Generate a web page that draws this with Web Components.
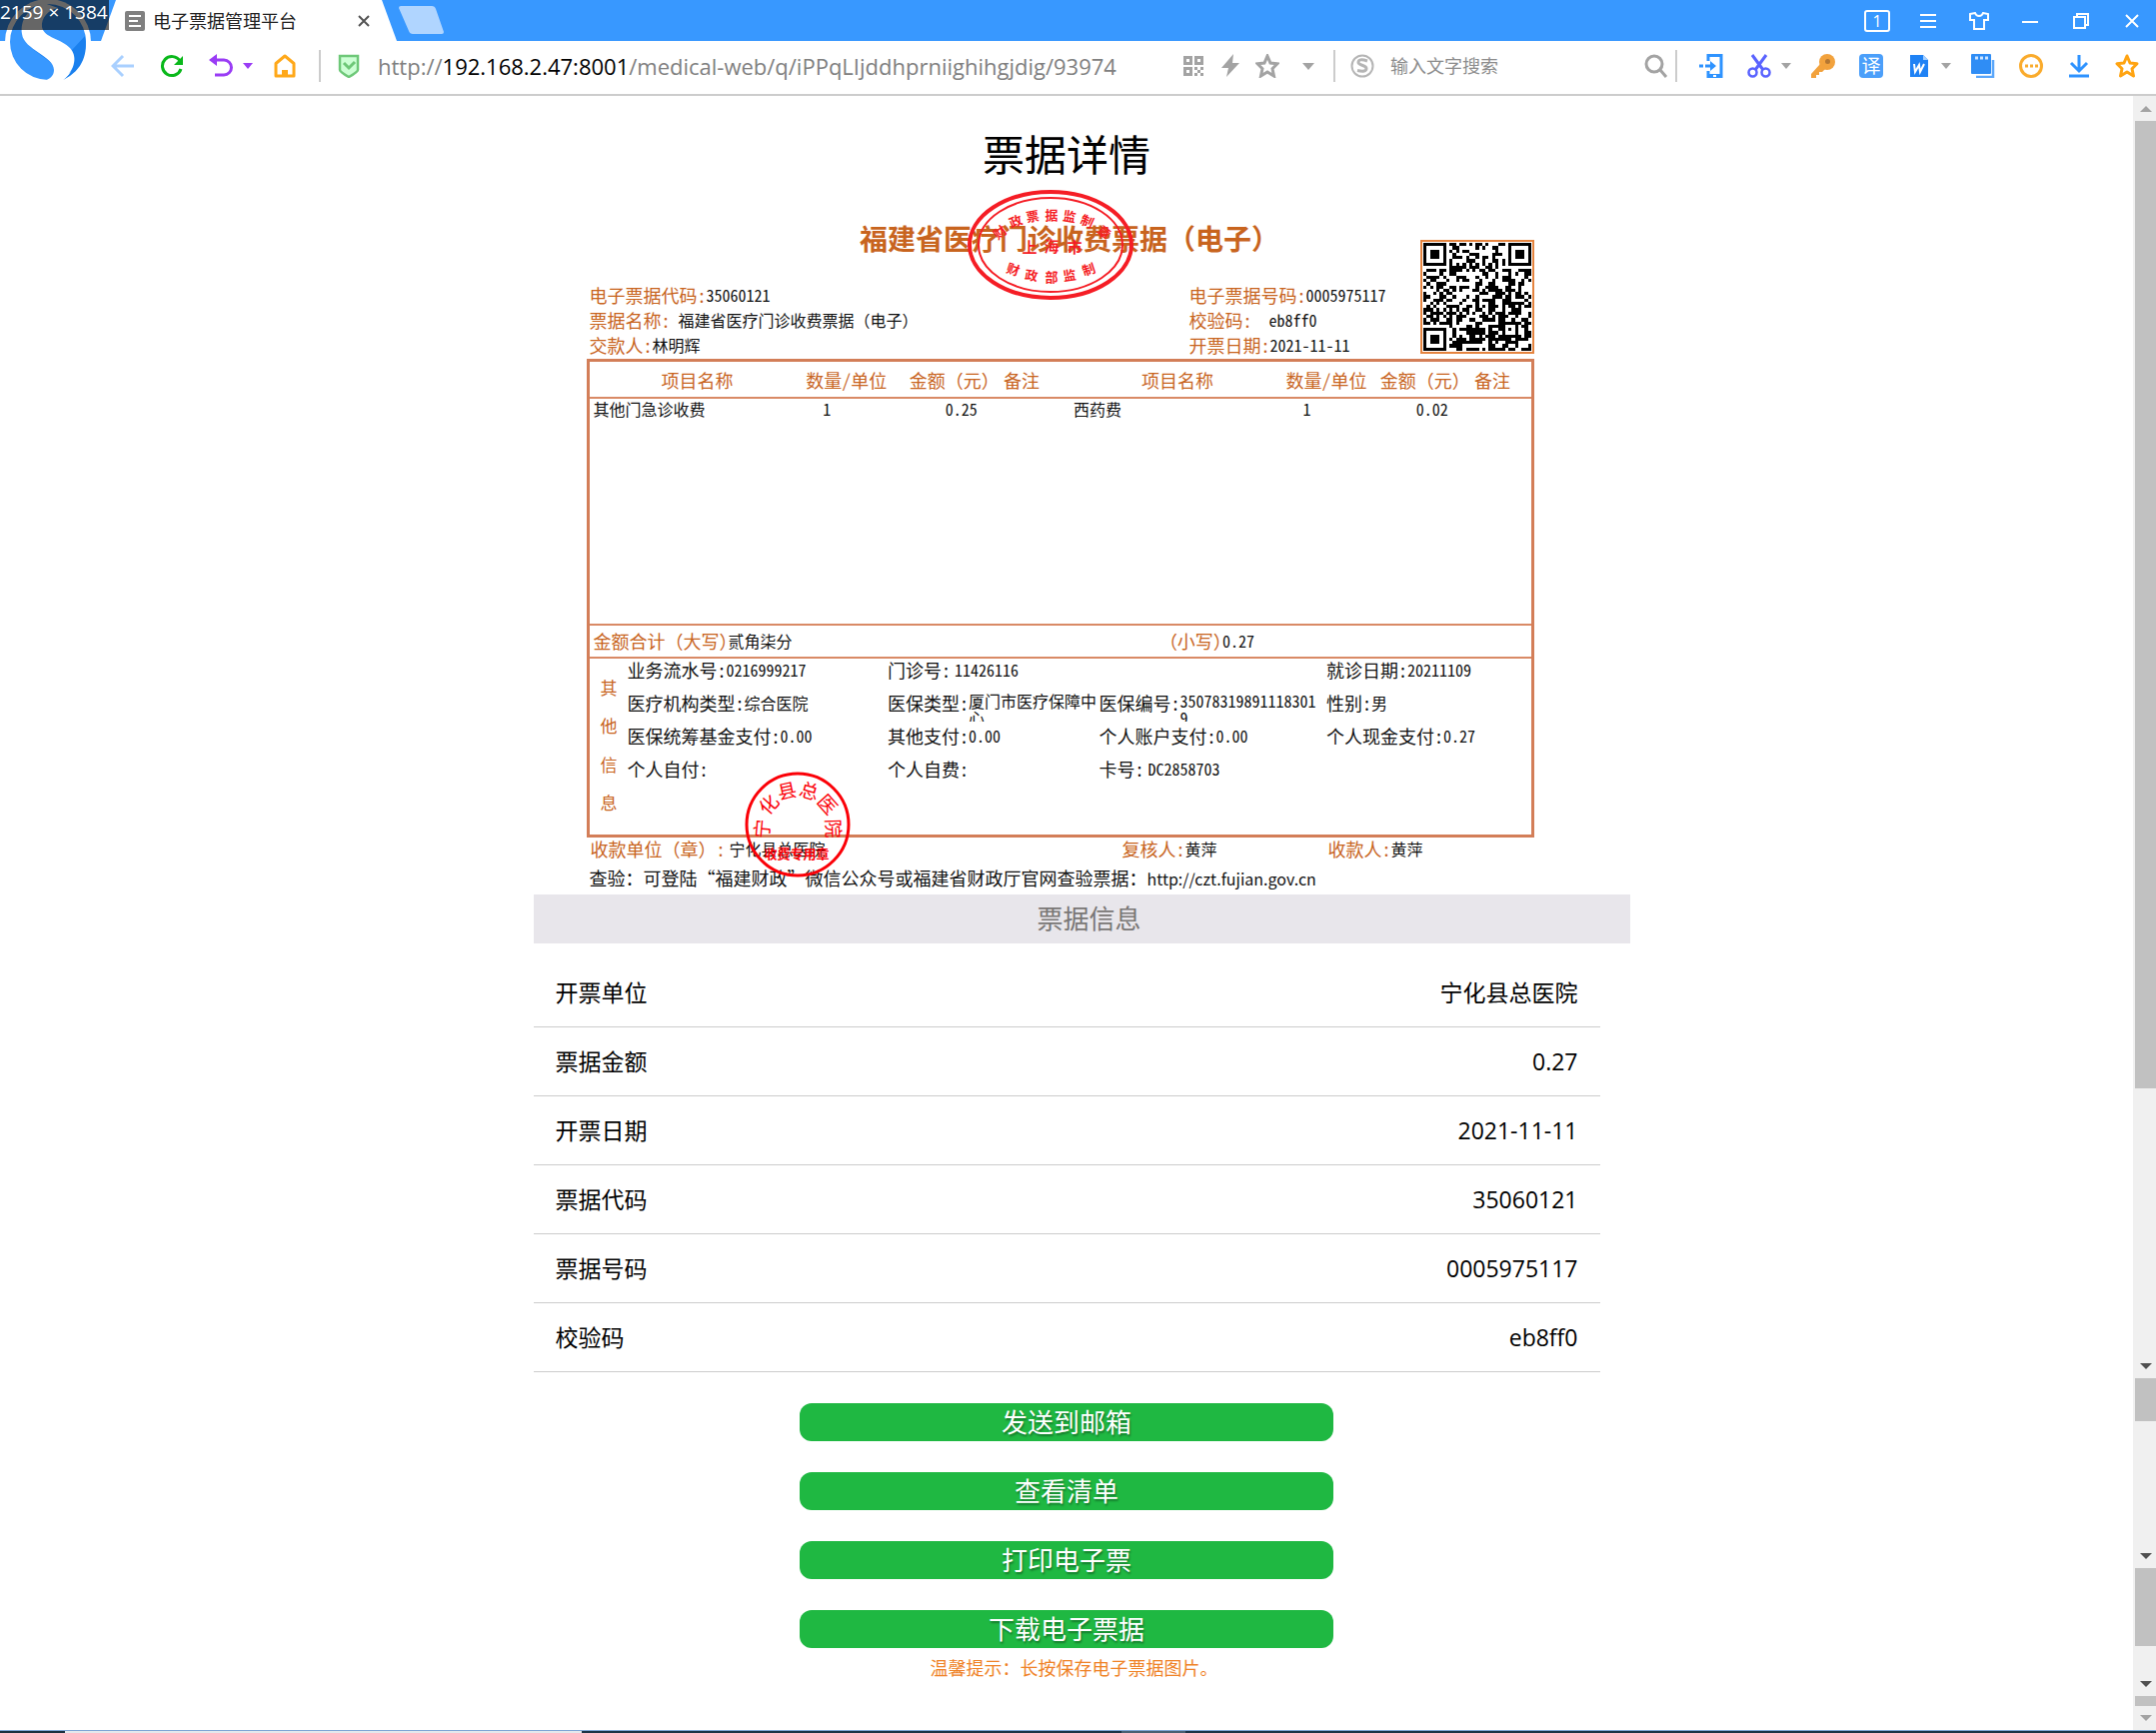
<!DOCTYPE html>
<html lang="zh-CN">
<head>
<meta charset="utf-8">
<title>电子票据管理平台</title>
<style>
  html, body {
    margin: 0;
  }
  body {
    min-height: 100vh;
    display: flex;
    flex-direction: column;
    background: #fff;
    color: #000;
    font-family: "Open Sans", "Noto Sans CJK SC", sans-serif;
  }
  .viewport {
    flex: 1;
    display: flex;
  }
  main {
    flex: 1;
    min-width: 0;
  }
  .column {
    width: 50%;
    margin: 0 auto;
  }
  h1 {
    margin: 0;
    padding-top: 29px;
    font-size: 42px;
    line-height: 60px;
    font-weight: 400;
    text-align: center;
  }
  .rows {
    margin-top: 15px;
  }
  .actions {
    display: flex;
    flex-direction: column;
    align-items: center;
    gap: 31px;
    padding-top: 31px;
  }
  .hint {
    margin: 0;
    padding: 6px 0 0 15px;
    color: #ef8226;
    font-size: 18px;
    line-height: 28px;
    text-align: center;
  }
</style>
</head>
<body>
  <browser-tabs tab-title="电子票据管理平台" size="2159 × 1384"></browser-tabs>
  <browser-toolbar></browser-toolbar>
  <div class="viewport">
    <main>
      <div class="column">
        <h1>票据详情</h1>
        <medical-receipt></medical-receipt>
        <section-bar>票据信息</section-bar>
        <div class="rows">
          <info-row label="开票单位">宁化县总医院</info-row>
          <info-row label="票据金额">0.27</info-row>
          <info-row label="开票日期">2021-11-11</info-row>
          <info-row label="票据代码">35060121</info-row>
          <info-row label="票据号码">0005975117</info-row>
          <info-row label="校验码">eb8ff0</info-row>
        </div>
        <div class="actions">
          <action-button>发送到邮箱</action-button>
          <action-button>查看清单</action-button>
          <action-button>打印电子票</action-button>
          <action-button>下载电子票据</action-button>
        </div>
        <p class="hint">温馨提示：长按保存电子票据图片。</p>
      </div>
    </main>
    <scroll-track></scroll-track>
  </div>
  <task-edge></task-edge>

<script>
  function attach(el, html) {
    const root = el.attachShadow({ mode: 'open' });
    const template = document.createElement('template');
    template.innerHTML = html;
    root.appendChild(template.content.cloneNode(true));
    return root;
  }

  // tab strip with logo and window controls
  class BrowserTabs extends HTMLElement {
    constructor() {
      super();
      this.root = attach(this, `
        <style>
          :host {
            position: relative;
            display: flex;
            justify-content: space-between;
            height: 41px;
            background: #3898ff;
          }
          button {
            border: 0;
            padding: 0;
            background: none;
            display: flex;
            align-items: center;
            justify-content: center;
          }
          .left, .controls {
            display: flex;
            align-items: center;
          }
          .left {
            align-items: flex-start;
            padding-left: 101px;
          }
          .tab {
            display: flex;
            align-items: center;
            box-sizing: border-box;
            width: 296px;
            height: 41px;
            padding: 0 27px 0 24px;
            background: #fff;
            clip-path: polygon(15px 0, 281px 0, 296px 100%, 0 100%);
          }
          .tab span {
            flex: 1;
            margin-left: 8px;
            font-size: 18px;
            line-height: 26px;
            color: #222;
          }
          .new {
            margin: 6px 0 0 2px;
          }
          .controls {
            gap: 25px;
            padding-right: 11px;
            height: 41px;
          }
          .controls button {
            width: 26px;
            height: 24px;
            color: #fff;
          }
          .controls .count {
            box-sizing: border-box;
            border: 2px solid #fff;
            border-radius: 3px;
            font: 16px/18px "Open Sans", sans-serif;
            height: 22px;
          }
          .logo {
            position: absolute;
            left: 5px;
            top: 0;
            z-index: 2;
          }
          .size {
            position: absolute;
            left: 0;
            top: 0;
            z-index: 3;
            width: 109px;
            height: 30px;
            background: rgba(0, 0, 0, .6);
            color: #fff;
            font-size: 19px;
            line-height: 24px;
            white-space: nowrap;
          }
        </style>
        <div class="left">
          <div class="tab">
            <svg width="20" height="20" viewBox="0 0 20 20"><rect width="20" height="20" rx="2" fill="#808080"/><path d="M4 5h12M4 10h9M4 15h12" stroke="#fff" stroke-width="2"/></svg>
            <span></span>
            <button aria-label="关闭标签"><svg width="12" height="12" viewBox="0 0 12 12"><path d="M1 1l10 10M11 1L1 11" stroke="#555" stroke-width="2"/></svg></button>
          </div>
          <button class="new" aria-label="新标签"><svg width="46" height="28" viewBox="0 0 46 28"><path d="M2 0h31q3 0 4 3l8 23q0 2-2 2H14q-3 0-4-3L0 2q0-2 2-2z" fill="#b0d5ff"/></svg></button>
        </div>
        <svg class="logo" width="86" height="84" viewBox="5 0 86 84">
          <circle cx="48" cy="42" r="43" fill="#fff"/>
          <circle cx="48" cy="42" r="38" fill="#3898ff"/>
          <path d="M24 26C18 46 44 54 54 66C52 52 36 44 24 26z" fill="#1a7ff0"/>
          <path d="M72 50C78 62 72 74 63 80C84 70 88 52 85 36z" fill="#1a80ee"/>
          <path d="M44 3C28 8 20 20 22 34C24 50 54 56 54 70C54 76 50 79 44 81L63 80C73 72 79 58 70 48C62 39 44 38 42 27C41 18 48 10 58 8z" fill="#fff"/>
        </svg>
        <div class="size"></div>
        <div class="controls">
          <button class="count">1</button>
          <button aria-label="菜单"><svg width="16" height="16" viewBox="0 0 16 16"><path d="M0 2h16M0 8h16M0 14h16" stroke="#fff" stroke-width="2"/></svg></button>
          <button aria-label="皮肤"><svg width="20" height="18" viewBox="0 0 20 18"><path d="M1 2l5-1q1 3 4 3t4-3l5 1v6h-4v9H5V8H1z" fill="none" stroke="#fff" stroke-width="2"/></svg></button>
          <button aria-label="最小化"><svg width="16" height="16" viewBox="0 0 16 16"><path d="M0 9h16" stroke="#fff" stroke-width="2"/></svg></button>
          <button aria-label="还原"><svg width="16" height="16" viewBox="0 0 16 16"><path d="M1 4h11v11H1zM4 4V1h11v11h-3" fill="none" stroke="#fff" stroke-width="2"/></svg></button>
          <button aria-label="关闭"><svg width="14" height="14" viewBox="0 0 14 14"><path d="M1 1l12 12M13 1L1 13" stroke="#fff" stroke-width="2"/></svg></button>
        </div>
      `);
    }

    connectedCallback() {
      this.root.querySelector('.tab span').textContent = this.getAttribute('tab-title');
      this.root.querySelector('.size').textContent = this.getAttribute('size');
    }
  }
  customElements.define('browser-tabs', BrowserTabs);

  const ICONS = {
    back: '<path d="M23 12H3M12 2L2 12l10 10" fill="none" stroke="#a9d0ff" stroke-width="3"/>',
    reload: '<path d="M20 7a9.500 9.500 0 1 0 1 8" fill="none" stroke="#0ab81b" stroke-width="3"/><path d="M23 2v9h-9z" fill="#0ab81b"/>',
    undo: '<path d="M4 6h11a7 7 0 0 1 0 15H6" fill="none" stroke="#9a3cf5" stroke-width="3"/><path d="M0 6l8-6v12z" fill="#9a3cf5"/>',
    home: '<path d="M3 9.500L12 2l9 7.500V22H3z" fill="none" stroke="#ffa819" stroke-width="3" stroke-linejoin="round"/><path d="M9 21v-5h6v5z" fill="#ffa819"/>',
    shield: '<path d="M3 2h18v14q0 2-9 7q-9-5-9-7z" fill="#ccffd4" stroke="#6ec878" stroke-width="2.500"/><path d="M7 9l5 5 6-6" fill="none" stroke="#6ec878" stroke-width="3"/>',
    code: '<g fill="none" stroke="#a3a3a3" stroke-width="3"><path d="M3.500 3.500h6v6h-6zM14.500 3.500h6v6h-6zM3.500 14.500h6v6h-6z"/></g><path d="M13 13h3v3h-3zM19 13h3v3h-3zM16 16h3v3h-3zM13 19h3v3h-3zM19 19h3v3h-3z" fill="#a3a3a3"/>',
    bolt: '<path d="M15 0L3 14h7l-2 9L21 9h-7z" fill="#a3a3a3"/>',
    fav: '<path d="M12 2l3 7 7 .7-5 5 1.500 7.300L12 18l-6.500 4L7 14.700l-5-5L9 9z" fill="none" stroke="#a3a3a3" stroke-width="3"/>',
    sogou: '<circle cx="12" cy="12" r="10.500" fill="none" stroke="#b5b5b5" stroke-width="2"/><path d="M17 7q-9-3-9 1.500c0 3 8 2.500 8 6q0 4-9 2" fill="none" stroke="#b5b5b5" stroke-width="3"/>',
    search: '<circle cx="10" cy="10" r="8" fill="none" stroke="#a3a3a3" stroke-width="3"/><path d="M16 16l6 7" stroke="#a3a3a3" stroke-width="3"/>',
    phone: '<path d="M9 7V1.500h13v21H9V17" fill="none" stroke="#2e93ff" stroke-width="3"/><path d="M8 20h15v4H8z" fill="#2e93ff"/><path d="M0 12h4M6 12h5" stroke="#2e93ff" stroke-width="3"/><path d="M11 7l6 5-6 5z" fill="#2e93ff"/><path d="M14 21h3v2h-3z" fill="#fff"/>',
    cut: '<path d="M5 1l11 15M19 1L8 16" stroke="#5a63ff" stroke-width="3"/><circle cx="5.500" cy="18.500" r="4" fill="none" stroke="#5a63ff" stroke-width="2.500"/><circle cx="18.500" cy="18.500" r="4" fill="none" stroke="#5a63ff" stroke-width="2.500"/>',
    key: '<circle cx="16" cy="8" r="8" fill="#f2a23d"/><path d="M9 10L0 20v4h5v-3h3v-3h3l5-5z" fill="#f2a23d"/><circle cx="16.500" cy="7.500" r="2.500" fill="#b37632"/>',
    word: '<path d="M3 1h13l5 5v17H3z" fill="#1f82f5"/><path d="M16 1l5 5h-5z" fill="#a5d0ff"/><path d="M7 10l1 8 4-7 1 7 4-8" fill="none" stroke="#fff" stroke-width="2"/>',
    film: '<path d="M22 6v17H5" fill="none" stroke="#5aa6fa" stroke-width="2.500"/><rect width="20" height="20" rx="1" fill="#2f8df5"/><path d="M4 4h3M9 4h3M14 4h3" stroke="#cfe5ff" stroke-width="3"/>',
    more: '<circle cx="12" cy="12" r="10.500" fill="none" stroke="#faab2c" stroke-width="3"/><path d="M6 12h3M11 12h3M16 12h3" stroke="#faab2c" stroke-width="3"/>',
    download: '<path d="M12 1v16M4 9l8 8 8-8M2 22h20" fill="none" stroke="#2e93ff" stroke-width="3"/>',
    star: '<path d="M12 2l3 7 7 .7-5 5 1.500 7.300L12 18l-6.500 4L7 14.700l-5-5L9 9z" fill="none" stroke="#ffa412" stroke-width="3" stroke-linejoin="round"/>',
    trans: '<rect width="24" height="24" rx="4" fill="#4b9ffa"/><text x="12" y="19" font-size="19" text-anchor="middle" fill="#fff">译</text>'
  };

  class ToolIcon extends HTMLElement {
    connectedCallback() {
      const name = this.getAttribute('name');
      attach(this, `
        <style>
          :host { display: block; flex: none; width: 24px; height: 24px; }
          button { display: block; width: 24px; height: 24px; padding: 0; border: 0; background: none; font-family: inherit; }
          svg { display: block; }
        </style>
        <button aria-label="${this.getAttribute('label')}"><svg width="24" height="24" viewBox="0 0 24 24">${ICONS[name]}</svg></button>
      `);
    }
  }
  customElements.define('tool-icon', ToolIcon);

  class BrowserToolbar extends HTMLElement {
    constructor() {
      super();
      attach(this, `
        <style>
          :host {
            display: flex;
            align-items: center;
            height: 50px;
            padding-bottom: 3px;
            border-bottom: 2px solid #ccc;
            background: #fff;
          }
          .nav, .tools {
            display: flex;
            align-items: center;
          }
          .nav {
            gap: 25px;
            padding: 0 22px 0 111px;
          }
          .tools {
            gap: 24px;
            padding: 0 17px 0 22px;
          }
          .caret {
            width: 0;
            border: 5px solid transparent;
            border-top: 6px solid #a3a3a3;
            border-bottom: 0;
          }
          .nav .caret { margin: 0 -5px 0 -15px; border-top-color: #9a3cf5; }
          .tools .caret { margin: 0 -4px 0 -14px; }
          .sep {
            width: 2px;
            height: 32px;
            background: #ccc;
          }
          .address {
            flex: 1;
            min-width: 0;
            display: flex;
            align-items: center;
            gap: 13px;
            padding: 0 19px 0 16px;
          }
          .url {
            flex: 1;
            min-width: 0;
            overflow: hidden;
            white-space: nowrap;
            margin-left: 4px;
            color: #808080;
            font-size: 22px;
            line-height: 28px;
          }
          .url b { font-weight: 400; color: #000; }
          .address .caret { margin: 0 0 0 10px; border-width: 7px 6px 0; }
          .search {
            display: flex;
            align-items: center;
            width: 340px;
            box-sizing: border-box;
            padding: 0 7px 0 15px;
          }
          input {
            flex: 1;
            min-width: 0;
            border: 0;
            padding: 0 0 0 16px;
            font: 18px/28px "Open Sans", "Noto Sans CJK SC", sans-serif;
            outline: 0;
          }
          input::placeholder { color: #8c8c8c; }
        </style>
        <div class="nav">
          <tool-icon name="back" label="后退"></tool-icon>
          <tool-icon name="reload" label="刷新"></tool-icon>
          <tool-icon name="undo" label="恢复"></tool-icon>
          <i class="caret"></i>
          <tool-icon name="home" label="主页"></tool-icon>
        </div>
        <i class="sep"></i>
        <div class="address">
          <tool-icon name="shield" label="安全"></tool-icon>
          <div class="url" role="textbox" contenteditable="true" spellcheck="false" aria-label="地址">http://<b>192.168.2.47:8001</b>/medical-web/q/iPPqLIjddhprniighihgjdig/93974</div>
          <tool-icon name="code" label="二维码"></tool-icon>
          <tool-icon name="bolt" label="加速"></tool-icon>
          <tool-icon name="fav" label="收藏"></tool-icon>
          <i class="caret"></i>
        </div>
        <i class="sep"></i>
        <div class="search">
          <tool-icon name="sogou" label="搜索引擎"></tool-icon>
          <input type="text" placeholder="输入文字搜索" aria-label="输入文字搜索">
          <tool-icon name="search" label="搜索"></tool-icon>
        </div>
        <i class="sep"></i>
        <div class="tools">
          <tool-icon name="phone" label="手机"></tool-icon>
          <tool-icon name="cut" label="截图"></tool-icon>
          <i class="caret"></i>
          <tool-icon name="key" label="密码"></tool-icon>
          <tool-icon name="trans" label="翻译"></tool-icon>
          <tool-icon name="word" label="文档"></tool-icon>
          <i class="caret"></i>
          <tool-icon name="film" label="视频"></tool-icon>
          <tool-icon name="more" label="更多"></tool-icon>
          <tool-icon name="download" label="下载"></tool-icon>
          <tool-icon name="star" label="收藏夹"></tool-icon>
        </div>
      `);
    }
  }
  customElements.define('browser-toolbar', BrowserToolbar);

  class QrCode extends HTMLElement {
    constructor() {
      super();
      const n = 33;
      let seed = 35060121;
      let d = '';
      const finder = (x, y) => {
        const r = Math.max(Math.abs(x - 3), Math.abs(y - 3));
        return r === 3 || r < 2;
      };
      for (let y = 0; y < n; y++) {
        for (let x = 0; x < n; x++) {
          seed = (seed * 1103515245 + 12345) % 2147483648;
          let on = (seed >> 12) % 100 < 51;
          if (x === 6 || y === 6) on = (x + y) % 2 === 0;
          if (Math.abs(x - 26) < 3 && Math.abs(y - 26) < 3) {
            const r = Math.max(Math.abs(x - 26), Math.abs(y - 26));
            on = r !== 1;
          }
          if (x < 8 && y < 8) on = x < 7 && y < 7 && finder(x, y);
          if (x > 24 && y < 8) on = x > 25 && y < 7 && finder(x - 26, y);
          if (x < 8 && y > 24) on = x < 7 && y > 25 && finder(x, y - 26);
          if (on) d += `M${x} ${y}h1v1h-1z`;
        }
      }
      attach(this, `
        <style>
          :host { display: block; box-sizing: border-box; width: 114px; height: 114px; padding: 1px; border: 2px solid #e5843f; }
          svg { display: block; }
        </style>
        <svg width="108" height="108" viewBox="0 0 33 33" shape-rendering="crispEdges" role="img" aria-label="二维码"><path d="${d}"/></svg>
      `);
    }
  }
  customElements.define('qr-code', QrCode);

  // label and value pair on the receipt; value comes from the slot
  class ReceiptField extends HTMLElement {
    connectedCallback() {
      attach(this, `
        <style>
          :host {
            display: flex;
            align-items: flex-start;
            min-width: 0;
            height: var(--field-line, 22px);
            line-height: var(--field-line, 22px);
            white-space: nowrap;
          }
          .label {
            flex: none;
            color: var(--label, #111);
            font-size: 18px;
          }
          .value {
            color: #111;
            font-size: 16px;
            margin-left: var(--value-gap, 0);
          }
          :host([wrap]) .value {
            max-width: 138px;
            max-height: 29px;
            line-height: 17px;
            padding-top: 1px;
            overflow: hidden;
            white-space: normal;
            word-break: break-all;
          }
        </style>
        <span class="label">${this.getAttribute('label')}</span>
        <span class="value"><slot></slot></span>
      `);
    }
  }
  customElements.define('receipt-field', ReceiptField);

  function arcText(items, size) {
    return items.map(([ch, x, y, r]) =>
      `<text x="${x}" y="${y}" font-size="${size}" transform="rotate(${r} ${x} ${y})">${ch}</text>`).join('');
  }

  class ReceiptStamp extends HTMLElement {
    connectedCallback() {
      const oval = this.getAttribute('kind') === 'oval';
      const art = oval ? `
        <svg width="166" height="111" viewBox="0 0 166 111">
          <ellipse cx="83" cy="55" rx="81" ry="53" fill="none" stroke="#f51d25" stroke-width="4"/>
          <ellipse cx="83" cy="55" rx="72" ry="47" fill="none" stroke="#f51d25" stroke-width="2"/>
          <g fill="#f51d25" text-anchor="middle" dominant-baseline="central" font-weight="700">
          ${arcText([['财', 32, 42, -38], ['政', 48, 31, -22], ['票', 65, 26, -10], ['据', 84, 24, 0], ['监', 102, 26, 10], ['制', 120, 31, 24], ['章', 137, 42, 38],
            ['财', 46, 79, 18], ['政', 64, 85, 8], ['部', 84, 86, 0], ['监', 102, 85, -8], ['制', 121, 79, -18]], 13)}
          ${arcText([['上', 62, 56, 0], ['海', 84, 55, 0], ['市', 107, 56, 0]], 15)}
          </g>
        </svg>` : `
        <svg width="106" height="106" viewBox="0 0 106 106">
          <circle cx="53" cy="53" r="51" fill="none" stroke="#fb0007" stroke-width="3"/>
          <g fill="#fb0007" text-anchor="middle" dominant-baseline="central">
          ${arcText([['宁', 16, 57, -85], ['化', 23, 32, -48], ['县', 42, 18, -12], ['总', 65, 18, 16], ['医', 84, 32, 48], ['院', 90, 57, 88]], 19)}
          <text x="52" y="81" font-size="13" font-weight="700">收费专用章</text>
          </g>
        </svg>`;
      attach(this, `
        <style>
          :host { display: block; }
          svg { display: block; }
        </style>
        ${art}
      `);
    }
  }
  customElements.define('receipt-stamp', ReceiptStamp);

  class MedicalReceipt extends HTMLElement {
    constructor() {
      super();
      attach(this, `
        <style>
          :host {
            --ink: #c8641e;
            position: relative;
            display: block;
            margin: 0 66px 4px 53px;
            padding-top: 35px;
            font-family: "Noto Sans Mono CJK SC", "Noto Sans CJK SC", sans-serif;
          }
          .head {
            display: grid;
            grid-template-columns: 600fr 231fr 114px;
            row-gap: 27px;
            padding-left: 3px;
            padding-bottom: 1px;
          }
          h2 {
            grid-area: 1 / 1 / 2 / 4;
            margin: 0;
            padding-left: 16px;
            color: var(--ink);
            font-size: 28px;
            line-height: 36px;
            font-weight: 700;
            text-align: center;
          }
          .head div {
            grid-row: 2;
          }
          .head receipt-field {
            --field-line: 25px;
          }
          .head receipt-field, .foot receipt-field {
            --label: var(--ink);
          }
          qr-code {
            grid-area: 1 / 3 / 3 / 4;
            align-self: end;
            margin-bottom: 4px;
          }
          .box {
            border: 3px solid #d37e58;
          }
          table {
            width: 100%;
            table-layout: fixed;
            border-collapse: collapse;
          }
          th {
            height: 35px;
            padding: 0;
            border-bottom: 2px solid #d98a66;
            color: var(--ink);
            font-size: 18px;
            line-height: 24px;
            font-weight: 400;
            text-align: left;
            white-space: nowrap;
          }
          .name { padding-left: 72px; }
          td {
            height: 226px;
            padding: 0 0 0 4px;
            box-sizing: border-box;
            vertical-align: top;
            font-size: 16px;
            line-height: 20px;
            color: #111;
          }
          td.qty { padding-left: 17px; }
          td.sum { padding-left: 36px; }
          .total {
            display: grid;
            grid-template-columns: 570fr 374fr;
            border: 2px solid #d98a66;
            border-width: 2px 0;
            padding-left: 4px;
          }
          .total receipt-field {
            --label: var(--ink);
            --field-line: 31px;
            --value-gap: -9px;
          }
          .other {
            display: flex;
            height: 176px;
          }
          .side {
            display: flex;
            flex-direction: column;
            justify-content: space-between;
            width: 38px;
            box-sizing: border-box;
            padding: 17px 0 20px 11px;
            color: var(--ink);
            font-size: 17px;
            line-height: 24px;
          }
          .fields {
            flex: 1;
            display: grid;
            grid-template-columns: 261fr 212fr 228fr 205fr;
            grid-auto-rows: 22px;
            row-gap: 11px;
          }
          .foot {
            display: grid;
            grid-template-columns: 532fr 206fr 206fr;
            padding-left: 4px;
          }
          .foot receipt-field {
            --field-line: 23px;
          }
          p {
            margin: 5px 0 0 3px;
            color: #111;
            font-size: 18px;
            line-height: 24px;
            white-space: nowrap;
          }
          p span {
            font: 16px/24px "Noto Sans CJK SC", sans-serif;
          }
          .oval, .round {
            position: absolute;
          }
          .oval { left: 381px; top: 5px; }
          .round { left: 158px; bottom: 13px; }
          .spaced { --value-gap: 8px; }
          .near { --value-gap: 4px; }
        </style>
        <div class="head">
          <h2>福建省医疗门诊收费票据（电子）</h2>
          <div>
            <receipt-field label="电子票据代码:">35060121</receipt-field>
            <receipt-field class="spaced" label="票据名称:">福建省医疗门诊收费票据（电子）</receipt-field>
            <receipt-field label="交款人:">林明辉</receipt-field>
          </div>
          <div>
            <receipt-field label="电子票据号码:">0005975117</receipt-field>
            <receipt-field class="spaced" label="校验码:&nbsp;">eb8ff0</receipt-field>
            <receipt-field label="开票日期:">2021-11-11</receipt-field>
          </div>
          <qr-code></qr-code>
        </div>
        <div class="box">
          <table>
            <colgroup>
              <col style="width: 23%"><col style="width: 11%"><col style="width: 10%"><col style="width: 7%">
              <col style="width: 23%"><col style="width: 10%"><col style="width: 10%"><col style="width: 6%">
            </colgroup>
            <thead>
              <tr>
                <th class="name">项目名称</th><th>数量/单位</th><th>金额（元）</th><th>备注</th>
                <th class="name">项目名称</th><th>数量/单位</th><th>金额（元）</th><th>备注</th>
              </tr>
            </thead>
            <tbody>
              <tr>
                <td>其他门急诊收费</td><td class="qty">1</td><td class="sum">0.25</td><td></td>
                <td>西药费</td><td class="qty">1</td><td class="sum">0.02</td><td></td>
              </tr>
            </tbody>
          </table>
          <div class="total">
            <receipt-field label="金额合计（大写）">贰角柒分</receipt-field>
            <receipt-field label="（小写）">0.27</receipt-field>
          </div>
          <div class="other">
            <div class="side"><span>其</span><span>他</span><span>信</span><span>息</span></div>
            <div class="fields">
              <receipt-field label="业务流水号:">0216999217</receipt-field>
              <receipt-field class="near" label="门诊号:">11426116</receipt-field>
              <span></span>
              <receipt-field label="就诊日期:">20211109</receipt-field>
              <receipt-field label="医疗机构类型:">综合医院</receipt-field>
              <receipt-field wrap label="医保类型:">厦门市医疗保障中心</receipt-field>
              <receipt-field wrap label="医保编号:">350783198911183019</receipt-field>
              <receipt-field label="性别:">男</receipt-field>
              <receipt-field label="医保统筹基金支付:">0.00</receipt-field>
              <receipt-field label="其他支付:">0.00</receipt-field>
              <receipt-field label="个人账户支付:">0.00</receipt-field>
              <receipt-field label="个人现金支付:">0.27</receipt-field>
              <receipt-field label="个人自付:"></receipt-field>
              <receipt-field label="个人自费:"></receipt-field>
              <receipt-field class="near" label="卡号:">DC2858703</receipt-field>
            </div>
          </div>
        </div>
        <div class="foot">
          <receipt-field class="near" label="收款单位（章）:">宁化县总医院</receipt-field>
          <receipt-field label="复核人:">黄萍</receipt-field>
          <receipt-field label="收款人:">黄萍</receipt-field>
        </div>
        <p>查验：可登陆“福建财政”微信公众号或福建省财政厅官网查验票据：<span>http://czt.fujian.gov.cn</span></p>
        <receipt-stamp class="oval" kind="oval"></receipt-stamp>
        <receipt-stamp class="round" kind="round"></receipt-stamp>
      `);
    }
  }
  customElements.define('medical-receipt', MedicalReceipt);

  class SectionBar extends HTMLElement {
    constructor() {
      super();
      attach(this, `
        <style>
          :host {
            display: block;
            margin-right: -30px;
            padding-left: 15px;
            background: #e8e6eb;
            color: #7a7776;
            font-size: 26px;
            line-height: 49px;
            text-align: center;
          }
        </style>
        <slot></slot>
      `);
    }
  }
  customElements.define('section-bar', SectionBar);

  class InfoRow extends HTMLElement {
    connectedCallback() {
      attach(this, `
        <style>
          :host {
            display: flex;
            justify-content: space-between;
            padding: 0 22px;
            border-bottom: 1px solid #ccc;
            font-size: 23px;
            line-height: 68px;
          }
        </style>
        <span>${this.getAttribute('label')}</span>
        <span><slot></slot></span>
      `);
    }
  }
  customElements.define('info-row', InfoRow);

  class ActionButton extends HTMLElement {
    constructor() {
      super();
      attach(this, `
        <style>
          :host {
            display: block;
            width: 50%;
          }
          button {
            display: block;
            width: 100%;
            height: 38px;
            padding: 0;
            border: 0;
            border-radius: 12px;
            background: #1fb842;
            color: #fff;
            font-family: inherit;
            font-size: 26px;
            line-height: 38px;
            text-shadow: 1px 2px 2px rgba(0, 0, 0, .35);
          }
        </style>
        <button type="button"><slot></slot></button>
      `);
    }
  }
  customElements.define('action-button', ActionButton);

  // stacked scrollbar pieces, heights are flex shares
  class ScrollTrack extends HTMLElement {
    constructor() {
      super();
      attach(this, `
        <style>
          :host {
            display: flex;
            flex-direction: column;
            width: 21px;
            padding-left: 2px;
            background: #f0f0f0;
          }
          .gap {
            display: flex;
            flex-direction: column;
            align-items: center;
            justify-content: flex-end;
          }
          .thumb { background: #c1c1c1; }
          .gap::after {
            content: "";
            margin-bottom: 9px;
            border: 6px solid transparent;
            border-top: 6px solid #505050;
            border-bottom: 0;
          }
          .up::after {
            border-top: 0;
            border-bottom: 6px solid #a3a3a3;
          }
          .off::after { border-top-color: #a3a3a3; }
        </style>
        <div class="gap up" style="flex: 25 0 0"></div>
        <div class="thumb" style="flex: 968 0 0"></div>
        <div class="gap" style="flex: 290 0 0"></div>
        <div class="thumb" style="flex: 43 0 0"></div>
        <div class="gap" style="flex: 147 0 0"></div>
        <div class="thumb" style="flex: 78 0 0"></div>
        <div class="gap" style="flex: 50 0 0"></div>
        <div class="thumb" style="flex: 10 0 0"></div>
        <div class="gap off" style="flex: 24 0 0"></div>
      `);
    }
  }
  customElements.define('scroll-track', ScrollTrack);

  class TaskEdge extends HTMLElement {
    constructor() {
      super();
      attach(this, `
        <style>
          :host {
            display: block;
            height: 2px;
            border-top: 1px solid #7fa6d6;
            background: linear-gradient(90deg, #1b3040 0 3%, #e4e8ec 3% 27%, #1d3447 27% 52%, #4a6073 52% 55%, #1d3447 55%);
          }
        </style>
      `);
    }
  }
  customElements.define('task-edge', TaskEdge);
</script>
</body>
</html>
